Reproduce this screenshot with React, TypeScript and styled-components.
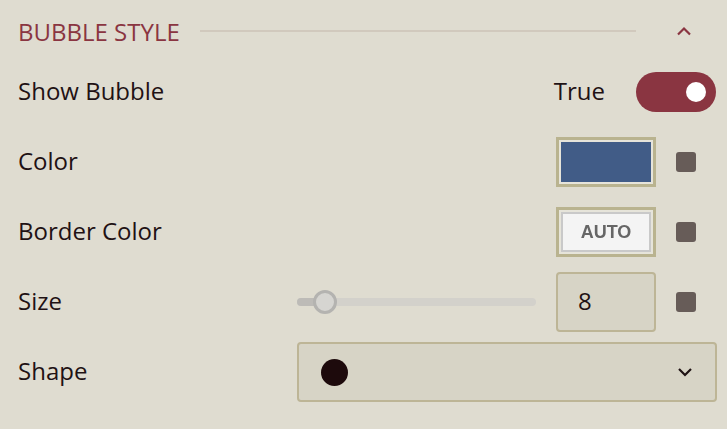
import { ReactElement } from "react";
import styled, { createGlobalStyle } from "styled-components";

const GlobalStyle = createGlobalStyle`
  html, body {
    margin: 0;
    padding: 0;
    background: #dfdcd0;
  }
  body {
    font-family: "Open Sans", "Noto Sans", sans-serif;
    color: #1f1214;
  }
`;

const Panel = styled.div`
  width: 727px;
  height: 429px;
  box-sizing: border-box;
  padding: 14px 11px 0 18px;
  background: #dfdcd0;
`;

const Header = styled.div`
  display: flex;
  align-items: center;
  height: 34px;
  margin-bottom: 14px;
`;

const Title = styled.div`
  font-size: 24px;
  color: #8a3541;
  white-space: nowrap;
`;

const Rule = styled.div`
  flex: 1;
  height: 2px;
  background: #d1c9bd;
  margin: 0 18px 0 20px;
`;

const Collapse = styled.div`
  width: 60px;
  display: flex;
  justify-content: center;
  padding-right: 2px;
`;

const Rows = styled.div`
  display: flex;
  flex-direction: column;
  gap: 10px;
`;

const Row = styled.div`
  display: grid;
  grid-template-columns: 279px 1fr;
  align-items: center;
  height: 60px;
`;

const Label = styled.div`
  font-size: 24px;
  color: #1f1214;
  margin-bottom: 3px;
`;

const Controls = styled.div`
  display: flex;
  align-items: center;
  justify-content: flex-end;
`;

const ToggleText = styled.span`
  font-size: 24px;
  margin: 0 31px 3px 0;
`;

const Toggle = styled.div`
  width: 80px;
  height: 40px;
  border-radius: 20px;
  background: #8a3541;
  display: flex;
  align-items: center;
  justify-content: flex-end;
  padding-right: 10px;
  box-sizing: border-box;
`;

const Knob = styled.div`
  width: 20px;
  height: 20px;
  border-radius: 50%;
  background: #ffffff;
`;

const SwatchFrame = styled.div`
  width: 100px;
  height: 50px;
  box-sizing: border-box;
  border: 3px solid #b9b38f;
  padding: 2px;
  background: #e6e4da;
`;

const SwatchFill = styled.div<{ $color: string }>`
  width: 100%;
  height: 100%;
  background: ${(p) => p.$color};
`;

const AutoFill = styled.div`
  width: 100%;
  height: 100%;
  box-sizing: border-box;
  background: #f4f4f4;
  border: 2px solid #c9c9c9;
  display: flex;
  align-items: center;
  justify-content: center;
  font-family: "Liberation Sans", Arial, sans-serif;
  font-weight: bold;
  font-size: 18px;
  color: #666666;
  filter: blur(0.7px);
`;

const Reset = styled.div`
  width: 20px;
  height: 20px;
  border-radius: 3px;
  background: #675c58;
  margin-left: 20px;
`;

const Spacer = styled.div`
  width: 20px;
`;

const SliderWrap = styled.div`
  flex: 1;
  display: flex;
  align-items: center;
  margin-right: 20px;
  position: relative;
  height: 30px;
`;

const Track = styled.div`
  width: 100%;
  height: 8px;
  border-radius: 4px;
  background: #d3d1cb;
  overflow: hidden;
`;

const TrackFill = styled.div`
  height: 100%;
  background: #bdbbb7;
`;

const Thumb = styled.div`
  position: absolute;
  top: 50%;
  width: 24px;
  height: 24px;
  box-sizing: border-box;
  border-radius: 50%;
  border: 3px solid #b4b3b0;
  background: #d6d5d1;
  transform: translate(-50%, -50%);
`;

const NumberBox = styled.div`
  width: 100px;
  height: 60px;
  box-sizing: border-box;
  border: 2px solid #bdb596;
  border-radius: 4px;
  background: #d7d4c6;
  display: flex;
  align-items: center;
  padding: 0 0 3px 20px;
  font-size: 24px;
`;

const Select = styled.div`
  width: 420px;
  height: 60px;
  box-sizing: border-box;
  border: 2px solid #bdb596;
  border-radius: 4px;
  background: #d7d4c6;
  display: flex;
  align-items: center;
  justify-content: space-between;
  padding: 0 22px 0 22px;
`;

const Dot = styled.div`
  width: 27px;
  height: 27px;
  border-radius: 50%;
  background: #1d0a0c;
`;

function Chevron(props: { up?: boolean; color: string }): ReactElement {
  return (
    <svg width="16" height="10" viewBox="0 0 16 10">
      <path
        d={props.up ? "M2 8.5 L8 2.5 L14 8.5" : "M2 2 L8 8 L14 2"}
        fill="none"
        stroke={props.color}
        strokeWidth="2.2"
      />
    </svg>
  );
}

export default function App(): ReactElement {
  const sizeValue = 8;
  const pct = 11.7;
  return (
    <>
      <GlobalStyle />
      <Panel>
        <Header>
          <Title>BUBBLE STYLE</Title>
          <Rule />
          <Collapse>
            <Chevron up color="#8a3541" />
          </Collapse>
        </Header>
        <Rows>
          <Row>
            <Label>Show Bubble</Label>
            <Controls>
              <ToggleText>True</ToggleText>
              <Toggle>
                <Knob />
              </Toggle>
            </Controls>
          </Row>
          <Row>
            <Label>Color</Label>
            <Controls>
              <SwatchFrame>
                <SwatchFill $color="#415c87" />
              </SwatchFrame>
              <Reset />
              <Spacer />
            </Controls>
          </Row>
          <Row>
            <Label>Border Color</Label>
            <Controls>
              <SwatchFrame>
                <AutoFill>AUTO</AutoFill>
              </SwatchFrame>
              <Reset />
              <Spacer />
            </Controls>
          </Row>
          <Row>
            <Label>Size</Label>
            <Controls>
              <SliderWrap>
                <Track>
                  <TrackFill style={{ width: `${pct}%` }} />
                </Track>
                <Thumb style={{ left: `${pct}%` }} />
              </SliderWrap>
              <NumberBox>{sizeValue}</NumberBox>
              <Reset />
              <Spacer />
            </Controls>
          </Row>
          <Row>
            <Label>Shape</Label>
            <Controls>
              <Select>
                <Dot />
                <Chevron color="#1f1214" />
              </Select>
            </Controls>
          </Row>
        </Rows>
      </Panel>
    </>
  );
}
